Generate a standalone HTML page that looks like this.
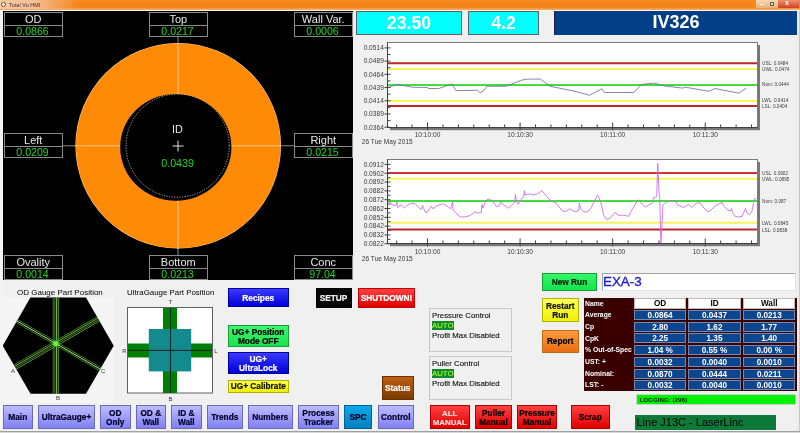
<!DOCTYPE html>
<html><head><meta charset="utf-8"><style>
*{margin:0;padding:0;box-sizing:border-box}
html,body{width:800px;height:433px;overflow:hidden;background:#f0f0f0;font-family:"Liberation Sans", sans-serif;position:relative}
body{will-change:transform}
.a{position:absolute}
.gb{position:absolute;width:58.5px;height:25px;border:1px solid #8a8a8a;background:#000}
.gl{height:13px;border-bottom:1px solid #8a8a8a;color:#e8e8e8;font-size:11px;line-height:12.5px;text-align:center}
.gv{height:10px;color:#22d422;font-size:10.6px;line-height:11.5px;text-align:center;padding-right:1.5px}
.btn{-webkit-text-stroke-width:0.2px;position:absolute;display:flex;align-items:center;justify-content:center;text-align:center;font-weight:bold;font-size:8.3px;line-height:9px;padding-top:1.5px}
.nav{top:405px;height:24px;border:1px solid #6a6ab0;background:linear-gradient(#bcbcff,#8080f4);color:#000028}
.red{top:405px;height:24px;border:1px solid #b00000;background:linear-gradient(#ff4040,#e00000);color:#000}
.cell{position:absolute;height:10px;background:#0c4590;color:#fff;font-weight:bold;font-size:8.2px;line-height:10px;text-align:center}
.lab{position:absolute;left:585px;color:#fff;font-weight:bold;font-size:6.8px;line-height:11px}
.pc{-webkit-text-stroke-width:0.12px;position:absolute;left:429px;width:83px;border:1px solid #c8c8c8;font-size:7.8px;line-height:10.2px;color:#111;padding:1.6px 0 0 2px}
.auto{display:inline-block;background:#0a8a2a;color:#b8ff30;width:22px;height:9px;line-height:9px}
</style></head><body>
<!-- title bar -->
<div class="a" style="left:0;top:0;width:800px;height:10px;background:linear-gradient(#f58a22,#f3820f 70%,#f6b070)"></div><div class="a" style="left:0;top:0;width:80px;height:9px;background:linear-gradient(90deg,#f4c8a0,#f4c09a 40%,rgba(243,130,15,0))"></div>
<div class="a" style="left:0;top:10px;width:800px;height:1px;background:#fff4e8"></div>
<div class="a" style="left:1px;top:2px;width:5px;height:5px;border-radius:50%;background:#fff;border:1px solid #7a4020"></div>
<div class="a" style="left:9px;top:1px;font-size:5.3px;line-height:8px;color:#3a2a20;letter-spacing:0.1px">Total Vu HMI</div>
<div class="a" style="left:756px;top:0;width:11px;height:7.5px;background:linear-gradient(#f8d8b0,#e8b080)"></div>
<div class="a" style="left:767px;top:0;width:11px;height:7.5px;background:linear-gradient(#f8d8b0,#e8b080)"></div>
<div class="a" style="left:778px;top:0;width:21px;height:7.5px;background:linear-gradient(#f09070,#d04020)"></div>
<div class="a" style="left:760px;top:3.5px;width:4px;height:1.2px;background:#fff"></div>
<div class="a" style="left:770px;top:1.5px;width:4px;height:4px;border:1px solid #666"></div>
<div class="a" style="left:785px;top:-1px;font-size:7px;color:#fff;font-weight:bold">x</div>
<!-- left window frame -->
<div class="a" style="left:797px;top:11px;width:3px;height:422px;background:#ececec"></div><div class="a" style="left:799px;top:11px;width:1px;height:422px;background:#c8c8c8"></div>
<!-- black gauge panel -->
<div class="a" style="left:3px;top:11px;width:350px;height:269px;background:#000"></div>
<svg class="a" style="left:0;top:0" width="800" height="433">
<line x1="178" y1="37" x2="178" y2="255" stroke="#8a8a8a" stroke-width="1"/>
<line x1="62" y1="145.8" x2="294" y2="145.8" stroke="#8a8a8a" stroke-width="1"/>
<circle cx="178.2" cy="145.8" r="102.8" fill="#ffd6a0"/>
<circle cx="178.2" cy="145.8" r="102.3" fill="#ff8a06"/>
<line x1="178" y1="43" x2="178" y2="249" stroke="#ffc888" stroke-width="1"/>
<line x1="75.5" y1="145.8" x2="281" y2="145.8" stroke="#ffc888" stroke-width="1"/>
<ellipse cx="175.8" cy="147.3" rx="55.6" ry="53.4" fill="#000"/>
<circle cx="177.6" cy="145.7" r="51.6" fill="none" stroke="#d8d8d8" stroke-width="0.8" stroke-dasharray="1.2 1.4"/>
<line x1="172.5" y1="146" x2="183.5" y2="146" stroke="#e0e0e0" stroke-width="1"/>
<line x1="178" y1="140.5" x2="178" y2="151.5" stroke="#e0e0e0" stroke-width="1"/>
<text x="177.5" y="133" text-anchor="middle" font-size="10.8" fill="#e8e8e8">ID</text>
<text x="177.6" y="166.6" text-anchor="middle" font-size="10.7" fill="#22d422">0.0439</text>
</svg>
<div class="gb" style="left:4px;top:12px"><div class="gl">OD</div><div class="gv">0.0866</div></div>
<div class="gb" style="left:149px;top:12px"><div class="gl">Top</div><div class="gv">0.0217</div></div>
<div class="gb" style="left:294px;top:12px"><div class="gl">Wall Var.</div><div class="gv">0.0006</div></div>
<div class="gb" style="left:4px;top:133px"><div class="gl">Left</div><div class="gv">0.0209</div></div>
<div class="gb" style="left:294px;top:133px"><div class="gl">Right</div><div class="gv">0.0215</div></div>
<div class="gb" style="left:4px;top:255px"><div class="gl">Ovality</div><div class="gv">0.0014</div></div>
<div class="gb" style="left:149px;top:255px"><div class="gl">Bottom</div><div class="gv">0.0213</div></div>
<div class="gb" style="left:294px;top:255px"><div class="gl">Conc</div><div class="gv">97.04</div></div>
<!-- top value boxes -->
<div class="a" style="left:356px;top:11px;width:106px;height:24px;background:#00ffff;border:1px solid #606060;color:#fff;font-weight:bold;font-size:17.5px;line-height:22px;text-align:center">23.50</div>
<div class="a" style="left:468px;top:11px;width:71px;height:24px;background:#00ffff;border:1px solid #606060;color:#fff;font-weight:bold;font-size:17.5px;line-height:22px;text-align:center">4.2</div>
<div class="a" style="left:554px;top:11px;width:243px;height:24px;background:#023f87;border-left:1px solid #202040;color:#fff;font-weight:bold;font-size:18px;line-height:23px;text-align:center">IV326</div>
<!-- charts -->
<svg class="a" style="left:0;top:0" width="800" height="433" font-family='"Liberation Sans", sans-serif'>
<rect x="760" y="45" width="0" height="0" fill="none"/>
<rect x="757.5" y="45" width="2.5" height="85.0" fill="#787878"/>
<rect x="390" y="127.5" width="370" height="2.7" fill="#787878"/>
<rect x="387.5" y="42.5" width="370" height="85.0" fill="#fff" stroke="#7a7a7a" stroke-width="1"/>
<line x1="388" x2="757" y1="63.25" y2="63.25" stroke="#bc2626" stroke-width="2"/>
<line x1="388" x2="757" y1="68.9" y2="68.9" stroke="#f6f45a" stroke-width="2"/>
<line x1="388" x2="757" y1="85" y2="85" stroke="#3ede3e" stroke-width="2"/>
<line x1="388" x2="757" y1="101" y2="101" stroke="#f6f45a" stroke-width="2"/>
<line x1="388" x2="757" y1="106" y2="106" stroke="#bc2626" stroke-width="2"/>
<path d="M388 87.5 L397.5 84.4 L412.5 87.25 L427.5 87.5 L428.75 88.5 L438.75 88.5 L451.9 84.1 L456.25 90.6 L460 90.6 L477.5 90.25 L480 92.5 L483.1 91.25 L486.9 86.25 L506.25 86.25 L521.25 80.25 L527.5 79.1 L540.6 79.1 L550 86.25 L575 91.25 L589.4 95.25 L601.9 88.75 L604.4 92.5 L633.75 92.5 L641.9 84.4 L653.75 83.1 L665 86 L682.5 88.1 L685.6 87.25 L708.75 91.25 L715 88.5 L738.75 93.1 L746.25 88.1" fill="none" stroke="#6e6eaa" stroke-width="0.85"/>
<line x1="387.5" x2="387.5" y1="42.5" y2="127.5" stroke="#404040" stroke-width="1"/>
<line x1="387.5" x2="757.5" y1="127.5" y2="127.5" stroke="#404040" stroke-width="1"/>
<line x1="384.5" x2="390.5" y1="47.90" y2="47.90" stroke="#404040" stroke-width="1"/>
<line x1="387.5" x2="390.5" y1="54.51" y2="54.51" stroke="#404040" stroke-width="1"/>
<text x="383.8" y="50.20" text-anchor="end" font-size="6.6" fill="#3a3a3a">0.0514</text>
<line x1="384.5" x2="390.5" y1="61.12" y2="61.12" stroke="#404040" stroke-width="1"/>
<line x1="387.5" x2="390.5" y1="67.73" y2="67.73" stroke="#404040" stroke-width="1"/>
<text x="383.8" y="63.42" text-anchor="end" font-size="6.6" fill="#3a3a3a">0.0489</text>
<line x1="384.5" x2="390.5" y1="74.34" y2="74.34" stroke="#404040" stroke-width="1"/>
<line x1="387.5" x2="390.5" y1="80.95" y2="80.95" stroke="#404040" stroke-width="1"/>
<text x="383.8" y="76.64" text-anchor="end" font-size="6.6" fill="#3a3a3a">0.0464</text>
<line x1="384.5" x2="390.5" y1="87.56" y2="87.56" stroke="#404040" stroke-width="1"/>
<line x1="387.5" x2="390.5" y1="94.17" y2="94.17" stroke="#404040" stroke-width="1"/>
<text x="383.8" y="89.86" text-anchor="end" font-size="6.6" fill="#3a3a3a">0.0439</text>
<line x1="384.5" x2="390.5" y1="100.78" y2="100.78" stroke="#404040" stroke-width="1"/>
<line x1="387.5" x2="390.5" y1="107.39" y2="107.39" stroke="#404040" stroke-width="1"/>
<text x="383.8" y="103.08" text-anchor="end" font-size="6.6" fill="#3a3a3a">0.0414</text>
<line x1="384.5" x2="390.5" y1="114.00" y2="114.00" stroke="#404040" stroke-width="1"/>
<line x1="387.5" x2="390.5" y1="120.61" y2="120.61" stroke="#404040" stroke-width="1"/>
<text x="383.8" y="116.30" text-anchor="end" font-size="6.6" fill="#3a3a3a">0.0389</text>
<line x1="384.5" x2="390.5" y1="127.22" y2="127.22" stroke="#404040" stroke-width="1"/>
<text x="383.8" y="129.52" text-anchor="end" font-size="6.6" fill="#3a3a3a">0.0364</text>
<text x="762" y="65.15" font-size="4.7" fill="#3a3a3a">USL: 0.0484</text>
<text x="762" y="70.80" font-size="4.7" fill="#3a3a3a">UWL: 0.0474</text>
<text x="762" y="86.40" font-size="4.7" fill="#3a3a3a">Nom: 0.0444</text>
<text x="762" y="102.30" font-size="4.7" fill="#3a3a3a">LWL: 0.0414</text>
<text x="762" y="107.80" font-size="4.7" fill="#3a3a3a">LSL: 0.0404</text>
<line x1="396.64" x2="396.64" y1="124.5" y2="127.5" stroke="#404040" stroke-width="1"/>
<line x1="412.07" x2="412.07" y1="124.5" y2="127.5" stroke="#404040" stroke-width="1"/>
<line x1="427.50" x2="427.50" y1="122.5" y2="130.5" stroke="#404040" stroke-width="1"/>
<line x1="442.93" x2="442.93" y1="124.5" y2="127.5" stroke="#404040" stroke-width="1"/>
<line x1="458.36" x2="458.36" y1="124.5" y2="127.5" stroke="#404040" stroke-width="1"/>
<line x1="473.79" x2="473.79" y1="124.5" y2="127.5" stroke="#404040" stroke-width="1"/>
<line x1="489.22" x2="489.22" y1="124.5" y2="127.5" stroke="#404040" stroke-width="1"/>
<line x1="504.65" x2="504.65" y1="124.5" y2="127.5" stroke="#404040" stroke-width="1"/>
<line x1="520.08" x2="520.08" y1="122.5" y2="130.5" stroke="#404040" stroke-width="1"/>
<line x1="535.51" x2="535.51" y1="124.5" y2="127.5" stroke="#404040" stroke-width="1"/>
<line x1="550.94" x2="550.94" y1="124.5" y2="127.5" stroke="#404040" stroke-width="1"/>
<line x1="566.37" x2="566.37" y1="124.5" y2="127.5" stroke="#404040" stroke-width="1"/>
<line x1="581.80" x2="581.80" y1="124.5" y2="127.5" stroke="#404040" stroke-width="1"/>
<line x1="597.23" x2="597.23" y1="124.5" y2="127.5" stroke="#404040" stroke-width="1"/>
<line x1="612.66" x2="612.66" y1="122.5" y2="130.5" stroke="#404040" stroke-width="1"/>
<line x1="628.09" x2="628.09" y1="124.5" y2="127.5" stroke="#404040" stroke-width="1"/>
<line x1="643.52" x2="643.52" y1="124.5" y2="127.5" stroke="#404040" stroke-width="1"/>
<line x1="658.95" x2="658.95" y1="124.5" y2="127.5" stroke="#404040" stroke-width="1"/>
<line x1="674.38" x2="674.38" y1="124.5" y2="127.5" stroke="#404040" stroke-width="1"/>
<line x1="689.81" x2="689.81" y1="124.5" y2="127.5" stroke="#404040" stroke-width="1"/>
<line x1="705.24" x2="705.24" y1="122.5" y2="130.5" stroke="#404040" stroke-width="1"/>
<line x1="720.67" x2="720.67" y1="124.5" y2="127.5" stroke="#404040" stroke-width="1"/>
<line x1="736.10" x2="736.10" y1="124.5" y2="127.5" stroke="#404040" stroke-width="1"/>
<line x1="751.53" x2="751.53" y1="124.5" y2="127.5" stroke="#404040" stroke-width="1"/>
<text x="427.50" y="136.70" text-anchor="middle" font-size="6.6" fill="#3a3a3a">10:10:00</text>
<text x="520.08" y="136.70" text-anchor="middle" font-size="6.6" fill="#3a3a3a">10:10:30</text>
<text x="612.66" y="136.70" text-anchor="middle" font-size="6.6" fill="#3a3a3a">10:11:00</text>
<text x="705.24" y="136.70" text-anchor="middle" font-size="6.6" fill="#3a3a3a">10:11:30</text>
<text x="361.8" y="143.65" font-size="6.6" fill="#3a3a3a">26 Tue May 2015</text>
<rect x="760" y="162" width="0" height="0" fill="none"/>
<rect x="757.5" y="162" width="2.5" height="84.0" fill="#787878"/>
<rect x="390" y="243.5" width="370" height="2.7" fill="#787878"/>
<rect x="387.5" y="159.5" width="370" height="84.0" fill="#fff" stroke="#7a7a7a" stroke-width="1"/>
<line x1="388" x2="757" y1="172.9" y2="172.9" stroke="#d03434" stroke-width="2"/>
<line x1="388" x2="757" y1="178.75" y2="178.75" stroke="#f6f45a" stroke-width="2"/>
<line x1="388" x2="757" y1="201" y2="201" stroke="#3ede3e" stroke-width="2"/>
<line x1="388" x2="757" y1="222.75" y2="222.75" stroke="#f6f45a" stroke-width="2"/>
<line x1="388" x2="757" y1="229.6" y2="229.6" stroke="#bc2626" stroke-width="2"/>
<path d="M388 201.9 L390.6 202.5 L392.5 205 L395.6 205.6 L396.9 201.9 L397.5 207.5 L401.25 204.75 L404.4 208.1 L407.5 205 L411.25 203.1 L415 203.5 L418.75 207.5 L421.25 209.4 L422.5 205.6 L425 211.9 L426.9 212.75 L431.25 206.25 L433.1 208.75 L437.5 205.6 L442.5 203.75 L446.25 205.6 L450.6 208.75 L452.5 201.9 L453.1 210 L460 216.9 L465 216.9 L470 215.6 L475 211.9 L478.1 213.1 L481.25 212.5 L481.9 204.4 L483 208.1 L485 202.5 L488.1 198.75 L491.9 200.6 L496.25 206.25 L498.75 206.25 L501.25 201.25 L502.5 204.4 L508.75 208.1 L514.4 202.5 L515.6 194.4 L516.25 201.25 L518.1 204.4 L521.9 198.1 L523.75 196.9 L524.4 190.6 L525 195 L530 193.75 L532.5 195 L537.5 194 L541.9 190.6 L547.5 197.5 L551.25 201.25 L556.25 203.1 L562.5 211.25 L566.25 211.25 L570 208.75 L575 211.9 L578.75 210.6 L579.4 203.1 L580.6 208.75 L583.75 211.9 L587.5 211.9 L591.25 207.5 L597.5 194.9 L600.6 201.25 L603.7 215.3 L606.8 219.4 L610 218.4 L615.1 212.2 L618.3 215.3 L623.5 215.3 L628.7 216.3 L630.7 212.2 L638 199.7 L645.3 207 L652.6 202.8 L653.6 197.6 L656.7 196.6 L657.8 163.3 L658.8 188.3 L659.8 199.7 L660.9 244.4 L663 204.9 L668.2 200.7 L675.4 200.7 L677.5 204.9 L683.75 207.5 L688.75 204.4 L691.9 207.5 L696.25 203.1 L700 202.5 L703 207 L707.5 211.5 L709.75 211.1 L715 205.9 L720.25 203.25 L722.1 201.75 L722.5 204.4 L727.75 210.4 L730.75 210.75 L731.5 208.5 L732.25 211.9 L735.25 216.4 L738.25 217.1 L742 216.4 L745 209.6 L745.4 208.5 L747.25 213.4 L749.5 214.5 L751.75 211.9 L753.6 202.5 L754.75 198.75 L756.25 198.4" fill="none" stroke="#cc66e6" stroke-width="0.85"/>
<line x1="387.5" x2="387.5" y1="159.5" y2="243.5" stroke="#404040" stroke-width="1"/>
<line x1="387.5" x2="757.5" y1="243.5" y2="243.5" stroke="#404040" stroke-width="1"/>
<line x1="384.5" x2="390.5" y1="164.40" y2="164.40" stroke="#404040" stroke-width="1"/>
<line x1="387.5" x2="390.5" y1="168.81" y2="168.81" stroke="#404040" stroke-width="1"/>
<text x="383.8" y="166.70" text-anchor="end" font-size="6.6" fill="#3a3a3a">0.0912</text>
<line x1="384.5" x2="390.5" y1="173.22" y2="173.22" stroke="#404040" stroke-width="1"/>
<line x1="387.5" x2="390.5" y1="177.63" y2="177.63" stroke="#404040" stroke-width="1"/>
<text x="383.8" y="175.52" text-anchor="end" font-size="6.6" fill="#3a3a3a">0.0902</text>
<line x1="384.5" x2="390.5" y1="182.04" y2="182.04" stroke="#404040" stroke-width="1"/>
<line x1="387.5" x2="390.5" y1="186.45" y2="186.45" stroke="#404040" stroke-width="1"/>
<text x="383.8" y="184.34" text-anchor="end" font-size="6.6" fill="#3a3a3a">0.0892</text>
<line x1="384.5" x2="390.5" y1="190.86" y2="190.86" stroke="#404040" stroke-width="1"/>
<line x1="387.5" x2="390.5" y1="195.27" y2="195.27" stroke="#404040" stroke-width="1"/>
<text x="383.8" y="193.16" text-anchor="end" font-size="6.6" fill="#3a3a3a">0.0882</text>
<line x1="384.5" x2="390.5" y1="199.68" y2="199.68" stroke="#404040" stroke-width="1"/>
<line x1="387.5" x2="390.5" y1="204.09" y2="204.09" stroke="#404040" stroke-width="1"/>
<text x="383.8" y="201.98" text-anchor="end" font-size="6.6" fill="#3a3a3a">0.0872</text>
<line x1="384.5" x2="390.5" y1="208.50" y2="208.50" stroke="#404040" stroke-width="1"/>
<line x1="387.5" x2="390.5" y1="212.91" y2="212.91" stroke="#404040" stroke-width="1"/>
<text x="383.8" y="210.80" text-anchor="end" font-size="6.6" fill="#3a3a3a">0.0862</text>
<line x1="384.5" x2="390.5" y1="217.32" y2="217.32" stroke="#404040" stroke-width="1"/>
<line x1="387.5" x2="390.5" y1="221.73" y2="221.73" stroke="#404040" stroke-width="1"/>
<text x="383.8" y="219.62" text-anchor="end" font-size="6.6" fill="#3a3a3a">0.0852</text>
<line x1="384.5" x2="390.5" y1="226.14" y2="226.14" stroke="#404040" stroke-width="1"/>
<line x1="387.5" x2="390.5" y1="230.55" y2="230.55" stroke="#404040" stroke-width="1"/>
<text x="383.8" y="228.44" text-anchor="end" font-size="6.6" fill="#3a3a3a">0.0842</text>
<line x1="384.5" x2="390.5" y1="234.96" y2="234.96" stroke="#404040" stroke-width="1"/>
<line x1="387.5" x2="390.5" y1="239.37" y2="239.37" stroke="#404040" stroke-width="1"/>
<text x="383.8" y="237.26" text-anchor="end" font-size="6.6" fill="#3a3a3a">0.0832</text>
<line x1="384.5" x2="390.5" y1="243.78" y2="243.78" stroke="#404040" stroke-width="1"/>
<text x="383.8" y="246.08" text-anchor="end" font-size="6.6" fill="#3a3a3a">0.0822</text>
<text x="762" y="174.80" font-size="4.7" fill="#3a3a3a">USL: 0.0902</text>
<text x="762" y="181.00" font-size="4.7" fill="#3a3a3a">UWL: 0.0895</text>
<text x="762" y="202.90" font-size="4.7" fill="#3a3a3a">Nom: 0.087</text>
<text x="762" y="225.00" font-size="4.7" fill="#3a3a3a">LWL: 0.0845</text>
<text x="762" y="231.50" font-size="4.7" fill="#3a3a3a">LSL: 0.0838</text>
<line x1="396.64" x2="396.64" y1="240.5" y2="243.5" stroke="#404040" stroke-width="1"/>
<line x1="412.07" x2="412.07" y1="240.5" y2="243.5" stroke="#404040" stroke-width="1"/>
<line x1="427.50" x2="427.50" y1="238.5" y2="246.5" stroke="#404040" stroke-width="1"/>
<line x1="442.93" x2="442.93" y1="240.5" y2="243.5" stroke="#404040" stroke-width="1"/>
<line x1="458.36" x2="458.36" y1="240.5" y2="243.5" stroke="#404040" stroke-width="1"/>
<line x1="473.79" x2="473.79" y1="240.5" y2="243.5" stroke="#404040" stroke-width="1"/>
<line x1="489.22" x2="489.22" y1="240.5" y2="243.5" stroke="#404040" stroke-width="1"/>
<line x1="504.65" x2="504.65" y1="240.5" y2="243.5" stroke="#404040" stroke-width="1"/>
<line x1="520.08" x2="520.08" y1="238.5" y2="246.5" stroke="#404040" stroke-width="1"/>
<line x1="535.51" x2="535.51" y1="240.5" y2="243.5" stroke="#404040" stroke-width="1"/>
<line x1="550.94" x2="550.94" y1="240.5" y2="243.5" stroke="#404040" stroke-width="1"/>
<line x1="566.37" x2="566.37" y1="240.5" y2="243.5" stroke="#404040" stroke-width="1"/>
<line x1="581.80" x2="581.80" y1="240.5" y2="243.5" stroke="#404040" stroke-width="1"/>
<line x1="597.23" x2="597.23" y1="240.5" y2="243.5" stroke="#404040" stroke-width="1"/>
<line x1="612.66" x2="612.66" y1="238.5" y2="246.5" stroke="#404040" stroke-width="1"/>
<line x1="628.09" x2="628.09" y1="240.5" y2="243.5" stroke="#404040" stroke-width="1"/>
<line x1="643.52" x2="643.52" y1="240.5" y2="243.5" stroke="#404040" stroke-width="1"/>
<line x1="658.95" x2="658.95" y1="240.5" y2="243.5" stroke="#404040" stroke-width="1"/>
<line x1="674.38" x2="674.38" y1="240.5" y2="243.5" stroke="#404040" stroke-width="1"/>
<line x1="689.81" x2="689.81" y1="240.5" y2="243.5" stroke="#404040" stroke-width="1"/>
<line x1="705.24" x2="705.24" y1="238.5" y2="246.5" stroke="#404040" stroke-width="1"/>
<line x1="720.67" x2="720.67" y1="240.5" y2="243.5" stroke="#404040" stroke-width="1"/>
<line x1="736.10" x2="736.10" y1="240.5" y2="243.5" stroke="#404040" stroke-width="1"/>
<line x1="751.53" x2="751.53" y1="240.5" y2="243.5" stroke="#404040" stroke-width="1"/>
<text x="427.50" y="253.55" text-anchor="middle" font-size="6.6" fill="#3a3a3a">10:10:00</text>
<text x="520.08" y="253.55" text-anchor="middle" font-size="6.6" fill="#3a3a3a">10:10:30</text>
<text x="612.66" y="253.55" text-anchor="middle" font-size="6.6" fill="#3a3a3a">10:11:00</text>
<text x="705.24" y="253.55" text-anchor="middle" font-size="6.6" fill="#3a3a3a">10:11:30</text>
<text x="361.8" y="260.90" font-size="6.6" fill="#3a3a3a">26 Tue May 2015</text>
</svg>

<!-- lower left -->
<div class="a" style="left:17px;top:287.5px;font-size:8px;line-height:10px;color:#000">OD Gauge Part Position</div>
<svg class="a" style="left:0;top:0" width="800" height="433"><defs><clipPath id="hx"><polygon points="113.7,345.7 86.0,393.8 30.5,393.8 2.7,345.7 30.4,297.6 86.0,297.6"/></clipPath></defs><rect x="2" y="297.5" width="111.5" height="105" fill="#f5f5f5"/><polygon points="113.7,345.7 86.0,393.8 30.5,393.8 2.7,345.7 30.4,297.6 86.0,297.6" fill="#000"/><g clip-path="url(#hx)"><line x1="58.40" y1="263.50" x2="58.40" y2="423.50" stroke="#3aa020" stroke-width="0.9"/><line x1="56.70" y1="263.50" x2="56.70" y2="423.50" stroke="#c8e060" stroke-width="0.9"/><line x1="54.90" y1="263.50" x2="54.90" y2="423.50" stroke="#3a9a20" stroke-width="0.9"/><line x1="53.20" y1="263.50" x2="53.20" y2="423.50" stroke="#5a7a50" stroke-width="0.9"/><line x1="-12.68" y1="302.11" x2="125.88" y2="382.11" stroke="#2a9a18" stroke-width="0.9"/><line x1="-13.48" y1="303.50" x2="125.08" y2="383.50" stroke="#e8f0a0" stroke-width="0.9"/><line x1="-14.28" y1="304.89" x2="124.28" y2="384.89" stroke="#2a9a18" stroke-width="0.9"/><line x1="-14.68" y1="381.42" x2="123.88" y2="301.42" stroke="#2a9a18" stroke-width="0.9"/><line x1="-13.88" y1="382.81" x2="124.68" y2="302.81" stroke="#a8c040" stroke-width="0.9"/><line x1="-13.08" y1="384.19" x2="125.48" y2="304.19" stroke="#2a9a18" stroke-width="0.9"/><line x1="-12.28" y1="385.58" x2="126.28" y2="305.58" stroke="#70a040" stroke-width="0.9"/><circle cx="55.8" cy="343.5" r="2.6" fill="#60ff40" opacity="0.85"/></g></svg>
<div class="a" style="left:11px;top:368px;font-size:6px;color:#333">A</div>
<div class="a" style="left:101px;top:368px;font-size:6px;color:#333">C</div>
<div class="a" style="left:56px;top:395px;font-size:6px;color:#333">B</div>
<div class="a" style="left:127px;top:287.5px;font-size:7.9px;line-height:10px;color:#000">UltraGauge Part Position</div>
<svg class="a" style="left:0;top:0" width="800" height="433">
<rect x="127.5" y="307.5" width="85" height="85.5" fill="#fff" stroke="#606060" stroke-width="1"/>
<rect x="163" y="308" width="14" height="85" fill="#008000"/>
<rect x="128" y="343.5" width="84" height="14" fill="#008000"/>
<rect x="148.8" y="329" width="42.4" height="42.4" fill="#138a8e"/>
<line x1="170.5" y1="308" x2="170.5" y2="393" stroke="#002020" stroke-width="1"/>
<line x1="128" y1="350.4" x2="212" y2="350.4" stroke="#002020" stroke-width="1"/>
<text x="170.5" y="303.6" text-anchor="middle" font-size="6" fill="#333">T</text>
<text x="124.5" y="352.5" text-anchor="middle" font-size="6" fill="#333">R</text>
<text x="216" y="352.5" text-anchor="middle" font-size="6" fill="#333">L</text>
<text x="170.5" y="400.5" text-anchor="middle" font-size="6" fill="#333">B</text>
</svg>
<!-- control buttons -->
<div class="btn" style="left:227.5px;top:288px;width:61.5px;height:19px;background:linear-gradient(#3a3aff,#0000d8);border:1px solid #0000a0;color:#fff">Recipes</div>
<div class="btn" style="left:227.5px;top:325px;width:61.5px;height:22px;background:linear-gradient(#40f470,#18e450);border:1px solid #18a038;color:#000">UG+ Position<br>Mode OFF</div>
<div class="btn" style="left:227.5px;top:352px;width:61.5px;height:22px;background:linear-gradient(#3a3aff,#0000d8);border:1px solid #0000a0;color:#fff">UG+<br>UltraLock</div>
<div class="btn" style="left:227.5px;top:379.5px;width:61.5px;height:13px;background:linear-gradient(#ffff50,#f0f000);border:1px solid #b0b000;color:#101000">UG+ Calibrate</div>
<div class="btn" style="left:315.5px;top:288px;width:36px;height:19.5px;background:#080808;border:1px solid #000;color:#f0f0f0">SETUP</div>
<div class="btn" style="left:358px;top:288px;width:57px;height:19.5px;background:linear-gradient(#ff4040,#e00000);border:1px solid #c00000;color:#fff">SHUTDOWN!</div>
<div class="btn" style="left:381.5px;top:375.5px;width:32.5px;height:24px;background:linear-gradient(#c06010,#7a3a00);border:1px solid #6a3000;color:#fff">Status</div>
<!-- pressure/puller -->
<div class="pc" style="top:308px;height:43.5px">Pressure Control<br><span class="auto">AUTO</span><br>Profit Max Disabled</div>
<div class="pc" style="top:356px;height:43.5px">Puller Control<br><span class="auto">AUTO</span><br>Profit Max Disabled</div>
<!-- nav -->
<div class="btn nav" style="left:2.5px;width:30.5px">Main</div>
<div class="btn nav" style="left:38px;width:57px">UltraGauge+</div>
<div class="btn nav" style="left:100px;width:30.5px">OD<br>Only</div>
<div class="btn nav" style="left:136px;width:29.5px">OD &amp;<br>Wall</div>
<div class="btn nav" style="left:171px;width:30.5px">ID &amp;<br>Wall</div>
<div class="btn nav" style="left:206.5px;width:36.5px">Trends</div>
<div class="btn nav" style="left:248px;width:44.5px">Numbers</div>
<div class="btn nav" style="left:298px;width:41px">Process<br>Tracker</div>
<div class="btn nav" style="left:344px;width:28px;background:linear-gradient(#10a8e8,#0080c0);border-color:#0060a0">SPC</div>
<div class="btn nav" style="left:377.5px;width:36.5px">Control</div>
<div class="btn red" style="left:429.5px;width:40.5px;color:#ffd8d8;font-size:7.9px">ALL<br>MANUAL</div>
<div class="btn red" style="left:475px;width:37px">Puller<br>Manual</div>
<div class="btn red" style="left:517px;width:40px">Pressure<br>Manual</div>
<div class="btn red" style="left:571px;width:38.5px">Scrap</div>
<!-- right lower -->
<div class="btn" style="left:542px;top:273px;width:55px;height:17.5px;background:linear-gradient(#34f868,#14e44c);border:1px solid #18a038;color:#082008">New Run</div>
<div class="a" style="left:601.5px;top:272.5px;width:194px;height:18.5px;background:#fff;border:1px solid #e4e4e4;border-top-color:#a4a4a4;border-left-color:#a4a4a4;color:#1c1cd0;font-size:13.4px;line-height:15.6px;padding-left:0.5px;-webkit-text-stroke:0.35px #1c1cd0">EXA-3</div>
<div class="btn" style="left:542px;top:298px;width:36.5px;height:24px;background:linear-gradient(#ffff60,#f0f000);border:1px solid #b0b000;color:#101000">Restart<br>Run</div>
<div class="btn" style="left:542px;top:329.5px;width:36.5px;height:23px;background:linear-gradient(#ff9a40,#e87010);border:1px solid #c06a10;color:#000">Report</div>
<div class="a" style="left:584px;top:298px;width:213px;height:93px;background:#3a0000"></div>
<div class="lab" style="top:297.5px">Name</div>
<div class="cell" style="left:634.3px;top:298.3px;width:51.7px;height:10.5px;line-height:10.5px;background:#fff;color:#000;border:1px solid #c8b8b8">OD</div>
<div class="cell" style="left:688.3px;top:298.3px;width:52.4px;height:10.5px;line-height:10.5px;background:#fff;color:#000;border:1px solid #c8b8b8">ID</div>
<div class="cell" style="left:743px;top:298.3px;width:52.4px;height:10.5px;line-height:10.5px;background:#fff;color:#000;border:1px solid #c8b8b8">Wall</div>
<div class="lab" style="top:309.2px">Average</div>
<div class="cell" style="left:634.3px;top:310.0px;width:51.7px;border:1px solid #7a88a8">0.0864</div>
<div class="cell" style="left:688.3px;top:310.0px;width:52.4px;border:1px solid #7a88a8">0.0437</div>
<div class="cell" style="left:743px;top:310.0px;width:52.4px;border:1px solid #7a88a8">0.0213</div>
<div class="lab" style="top:320.9px">Cp</div>
<div class="cell" style="left:634.3px;top:321.7px;width:51.7px;border:1px solid #7a88a8">2.80</div>
<div class="cell" style="left:688.3px;top:321.7px;width:52.4px;border:1px solid #7a88a8">1.62</div>
<div class="cell" style="left:743px;top:321.7px;width:52.4px;border:1px solid #7a88a8">1.77</div>
<div class="lab" style="top:332.6px">CpK</div>
<div class="cell" style="left:634.3px;top:333.4px;width:51.7px;border:1px solid #7a88a8">2.25</div>
<div class="cell" style="left:688.3px;top:333.4px;width:52.4px;border:1px solid #7a88a8">1.35</div>
<div class="cell" style="left:743px;top:333.4px;width:52.4px;border:1px solid #7a88a8">1.40</div>
<div class="lab" style="top:344.3px">% Out-of-Spec</div>
<div class="cell" style="left:634.3px;top:345.1px;width:51.7px;border:1px solid #7a88a8">1.04 %</div>
<div class="cell" style="left:688.3px;top:345.1px;width:52.4px;border:1px solid #7a88a8">0.55 %</div>
<div class="cell" style="left:743px;top:345.1px;width:52.4px;border:1px solid #7a88a8">0.00 %</div>
<div class="lab" style="top:356.0px">UST: +</div>
<div class="cell" style="left:634.3px;top:356.8px;width:51.7px;border:1px solid #7a88a8">0.0032</div>
<div class="cell" style="left:688.3px;top:356.8px;width:52.4px;border:1px solid #7a88a8">0.0040</div>
<div class="cell" style="left:743px;top:356.8px;width:52.4px;border:1px solid #7a88a8">0.0010</div>
<div class="lab" style="top:367.7px">Nominal:</div>
<div class="cell" style="left:634.3px;top:368.5px;width:51.7px;border:1px solid #7a88a8">0.0870</div>
<div class="cell" style="left:688.3px;top:368.5px;width:52.4px;border:1px solid #7a88a8">0.0444</div>
<div class="cell" style="left:743px;top:368.5px;width:52.4px;border:1px solid #7a88a8">0.0211</div>
<div class="lab" style="top:379.4px">LST: -</div>
<div class="cell" style="left:634.3px;top:380.2px;width:51.7px;border:1px solid #7a88a8">0.0032</div>
<div class="cell" style="left:688.3px;top:380.2px;width:52.4px;border:1px solid #7a88a8">0.0040</div>
<div class="cell" style="left:743px;top:380.2px;width:52.4px;border:1px solid #7a88a8">0.0010</div>
<div class="a" style="left:635.5px;top:394px;width:160px;height:11px;background:#00f000;border:1px solid #c0d8c0;font-weight:bold;font-size:6.2px;line-height:9.5px;color:#102010;padding-left:3px">LOGGING: (298)</div>
<div class="a" style="left:634.5px;top:415px;width:141.5px;height:14.5px;background:#0e7a3a;font-size:11px;line-height:15px;color:#000;padding-left:2px">Line J13C - LaserLinc</div>
<div class="a" style="left:0;top:431px;width:800px;height:1px;background:#a0a0a0"></div><div class="a" style="left:0;top:432px;width:800px;height:1px;background:#d8d8d8"></div>
<div class="a" style="left:0;top:11px;width:3px;height:420px;background:#f4f4f4"></div>
</body></html>
